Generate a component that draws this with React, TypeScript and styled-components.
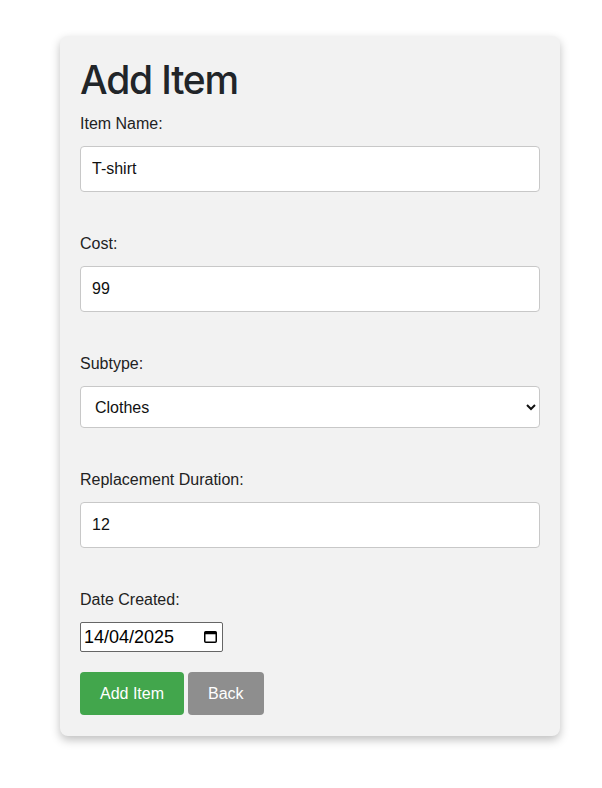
import React from "react";
import styled, { createGlobalStyle } from "styled-components";

const GlobalStyle = createGlobalStyle`
  body {
    margin: 0;
    background: #ffffff;
    font-family: "Liberation Sans", Arial, sans-serif;
    color: #222;
  }
`;

const Page = styled.div`
  padding: 36px 0 40px 60px;
`;

const Card = styled.div`
  width: 500px;
  box-sizing: border-box;
  background: #f2f2f2;
  border-radius: 8px;
  padding: 20px 20px 21px;
  box-shadow: 0 4px 10px rgba(0, 0, 0, 0.25);
`;

const Title = styled.h1`
  margin: 0 0 10px;
  font-family: Inter, "Liberation Sans", sans-serif;
  font-size: 39px;
  line-height: 48px;
  font-weight: 500;
  letter-spacing: -1.2px;
  color: #212529;
`;

const Field = styled.div<{ gap?: number }>`
  display: flex;
  flex-direction: column;
  margin-bottom: ${(p) => (p.gap ?? 42)}px;
`;

const Label = styled.label`
  font-size: 16px;
  line-height: 20px;
  color: #222;
  margin-bottom: 12px;
`;

const TextInput = styled.input`
  box-sizing: border-box;
  width: 100%;
  height: 46px;
  padding: 0 11px;
  border: 1px solid #c8c8c8;
  border-radius: 4px;
  background: #fff;
  font-family: inherit;
  font-size: 16px;
  color: #111;
  outline: none;
`;

const Select = styled.select`
  box-sizing: border-box;
  width: 100%;
  height: 42px;
  padding: 0 10px;
  border: 1px solid #c8c8c8;
  border-radius: 4px;
  background: #fff;
  font-family: inherit;
  font-size: 16px;
  color: #111;
`;

const DateBox = styled.div`
  align-self: flex-start;
  display: flex;
  align-items: center;
  justify-content: space-between;
  width: 143px;
  height: 30px;
  box-sizing: border-box;
  padding: 0 5px 0 3px;
  border: 1px solid #666;
  border-radius: 2px;
  background: #fff;
`;

const DateText = styled.span`
  font-size: 18px;
  color: #000;
`;

const Buttons = styled.div`
  display: flex;
  gap: 4px;
`;

const Button = styled.button<{ tone: "green" | "gray" }>`
  height: 43px;
  padding: 0 20px;
  border: none;
  border-radius: 4px;
  background: ${(p) => (p.tone === "green" ? "#42a64c" : "#8e8e8e")};
  color: #fff;
  font-family: inherit;
  font-size: 16px;
  cursor: pointer;
`;

const CalendarIcon = () => (
  <svg width="13" height="12" viewBox="0 0 13 12">
    <rect x="0.75" y="0.75" width="11.5" height="10.5" rx="1" fill="none" stroke="#000" strokeWidth="1.5" />
    <rect x="0.75" y="0.75" width="11.5" height="2.5" fill="#000" />
  </svg>
);

export default function App() {
  return (
    <>
      <GlobalStyle />
      <Page>
        <Card>
          <Title>Add Item</Title>
          <Field>
            <Label>Item Name:</Label>
            <TextInput defaultValue="T-shirt" />
          </Field>
          <Field>
            <Label>Cost:</Label>
            <TextInput defaultValue="99" />
          </Field>
          <Field>
            <Label>Subtype:</Label>
            <Select defaultValue="Clothes">
              <option>Clothes</option>
              <option>Electronics</option>
              <option>Furniture</option>
            </Select>
          </Field>
          <Field>
            <Label>Replacement Duration:</Label>
            <TextInput defaultValue="12" />
          </Field>
          <Field gap={20}>
            <Label>Date Created:</Label>
            <DateBox>
              <DateText>14/04/2025</DateText>
              <CalendarIcon />
            </DateBox>
          </Field>
          <Buttons>
            <Button tone="green">Add Item</Button>
            <Button tone="gray">Back</Button>
          </Buttons>
        </Card>
      </Page>
    </>
  );
}
